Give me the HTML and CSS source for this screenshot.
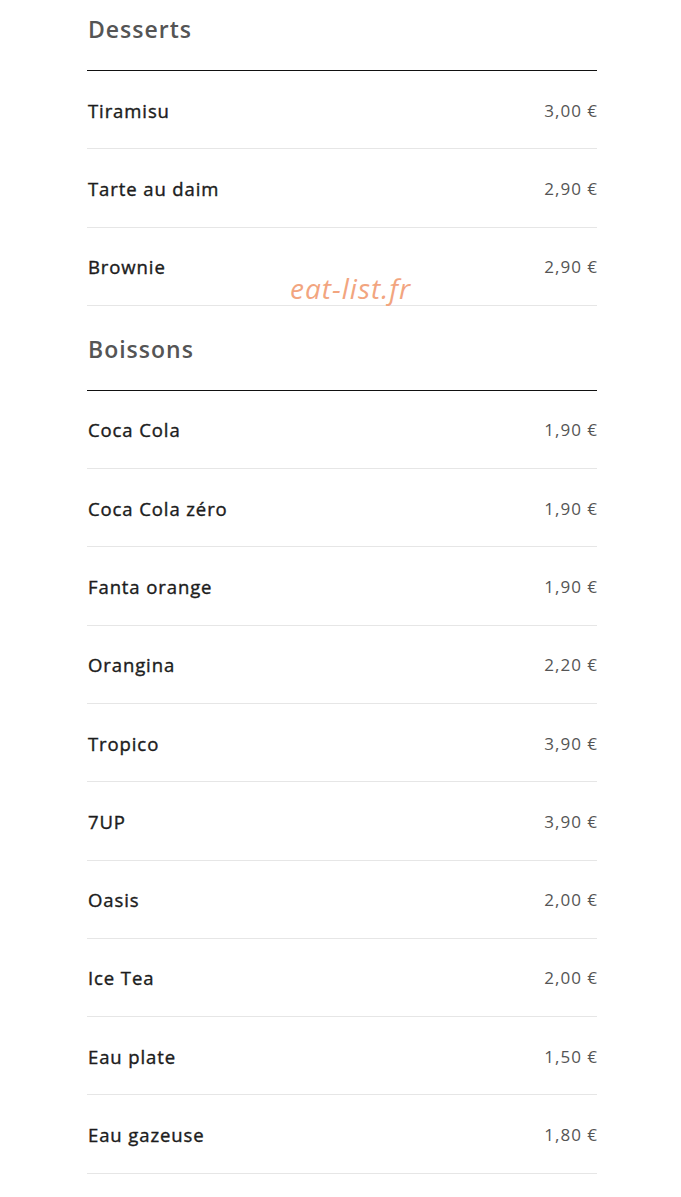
FILE: index.html
```html
<!DOCTYPE html>
<html lang="fr">
<head>
<meta charset="utf-8">
<title>Menu</title>
<link rel="stylesheet" href="styles.css">
</head>
<body>
<main class="menu">
  <section class="cat cat-first">
    <h2 class="cat-title">Desserts</h2>
    <ul class="items">
      <li class="item"><span class="name">Tiramisu</span><span class="price">3,00 €</span></li>
      <li class="item"><span class="name">Tarte au daim</span><span class="price">2,90 €</span></li>
      <li class="item"><span class="name">Brownie</span><span class="price">2,90 €</span></li>
    </ul>
  </section>
  <section class="cat">
    <h2 class="cat-title">Boissons</h2>
    <ul class="items">
      <li class="item"><span class="name">Coca Cola</span><span class="price">1,90 €</span></li>
      <li class="item"><span class="name">Coca Cola zéro</span><span class="price">1,90 €</span></li>
      <li class="item"><span class="name">Fanta orange</span><span class="price">1,90 €</span></li>
      <li class="item"><span class="name">Orangina</span><span class="price">2,20 €</span></li>
      <li class="item"><span class="name">Tropico</span><span class="price">3,90 €</span></li>
      <li class="item"><span class="name">7UP</span><span class="price">3,90 €</span></li>
      <li class="item"><span class="name">Oasis</span><span class="price">2,00 €</span></li>
      <li class="item"><span class="name">Ice Tea</span><span class="price">2,00 €</span></li>
      <li class="item"><span class="name">Eau plate</span><span class="price">1,50 €</span></li>
      <li class="item"><span class="name">Eau gazeuse</span><span class="price">1,80 €</span></li>
    </ul>
  </section>
</main>
<div class="watermark">eat-list.fr</div>
</body>
</html>
```

FILE: styles.css
```css
html, body {
  margin: 0;
  padding: 0;
  background: #fff;
}
body {
  font-family: "Open Sans", "Liberation Sans", sans-serif;
  position: relative;
  min-height: 1197px;
  letter-spacing: 1px;
}
.menu {
  width: 510px;
  margin-left: 87px;
}
.cat-title {
  margin: 0;
  padding: 27px 0 25px 1px;
  font-size: 23px;
  line-height: 32px;
  font-weight: 600;
  color: #555;
  border-bottom: 1px solid #111;
}
.cat-first .cat-title {
  padding-top: 13px;
}
.items {
  list-style: none;
  margin: 0;
  padding: 0;
}
.item {
  display: flex;
  justify-content: space-between;
  align-items: center;
  padding: 25.65px 0 24.65px;
  line-height: 27px;
  border-bottom: 1px solid #e6e6e6;
}
.name {
  font-size: 18.5px;
  font-weight: 400;
  letter-spacing: 0.9px;
  color: #1c1c1c;
  -webkit-text-stroke: 0.4px #1c1c1c;
  padding-left: 1px;
}
.price {
  font-size: 17px;
  font-weight: 400;
  color: #555;
  margin-right: -1px;
}
.watermark {
  position: absolute;
  left: 290px;
  top: 268px;
  font-size: 28px;
  line-height: 40px;
  font-style: italic;
  color: #f2a57f;
}
```
